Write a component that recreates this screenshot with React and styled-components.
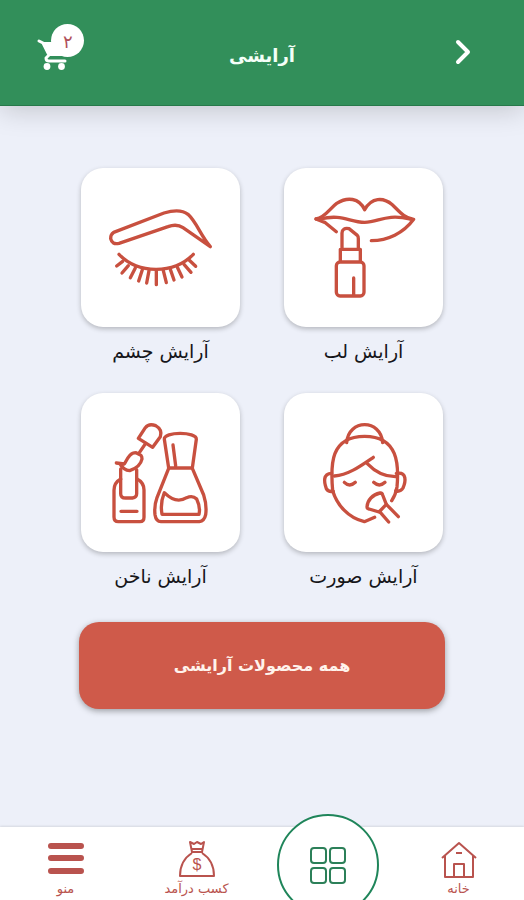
import React from 'react'
import styled, { createGlobalStyle } from 'styled-components'

const GlobalStyle = createGlobalStyle`
  * {
    box-sizing: border-box;
  }
  body {
    margin: 0;
    font-family: 'DejaVu Sans', sans-serif;
    background-color: #edf0f9;
  }
`
const Page = styled.div`
  min-height: 100vh;
  display: flex;
  flex-direction: column;
  overflow: hidden;
`
const Header = styled.header`
  height: 106px;
  padding: 0 36px;
  display: grid;
  grid-template-columns: 1fr auto 1fr;
  align-items: center;
  background-color: #328f5a;
  border-bottom: 1px solid #27794a;
  box-shadow: 0 4px 26px rgba(0, 0, 0, 0.18);
`
const Title = styled.h1`
  margin: 0;
  padding-top: 6px;
  font-size: 18px;
  line-height: 32px;
  font-weight: bold;
  color: #f4fff8;
`
const IconButton = styled.button`
  justify-self: ${props => (props.$end ? 'end' : 'start')};
  padding: 0;
  display: flex;
  border: none;
  background: none;
  color: #fff;
  cursor: pointer;
`
const CartButton = styled(IconButton)`
  position: relative;
  width: 48px;
  height: 46px;
  margin-bottom: 12px;
  align-items: flex-end;
  direction: ltr;
`
const Badge = styled.span`
  position: absolute;
  top: 0;
  right: 0;
  width: 33px;
  height: 33px;
  border-radius: 50%;
  background-color: #fff;
  color: #b0505a;
  font-size: 18px;
  line-height: 36px;
  text-align: center;
`
const Main = styled.main`
  flex: 1;
  padding: 62px 79px 40px;
`
const Categories = styled.div`
  padding: 0 2px;
  display: grid;
  grid-template-columns: 1fr 1fr;
  column-gap: 44px;
  row-gap: 28px;
`
const Category = styled.a`
  color: #16161a;
  text-decoration: none;
  text-align: center;
`
const Card = styled.span`
  display: block;
  aspect-ratio: 1;
  border-radius: 22px;
  background-color: #fff;
  box-shadow: 0 2px 5px rgba(0, 0, 0, 0.24);
`
const Drawing = styled.svg`
  display: block;
  width: 100%;
  height: 100%;
  fill: none;
  stroke: #c8503f;
  stroke-width: 10;
  stroke-linecap: round;
  stroke-linejoin: round;
`
const Label = styled.span`
  display: block;
  padding-top: 10px;
  font-size: 19px;
  line-height: 28px;
`
const AllProducts = styled.button`
  width: 100%;
  height: 87px;
  margin-top: 32px;
  border: none;
  border-radius: 20px;
  background-color: #cf5a4a;
  box-shadow: 0 2px 6px rgba(0, 0, 0, 0.35);
  color: #fff3ec;
  font-family: inherit;
  font-size: 16px;
  font-weight: bold;
  cursor: pointer;
`
const Nav = styled.nav`
  height: 73px;
  display: grid;
  grid-template-columns: repeat(4, 1fr);
  background-color: #fff;
  box-shadow: 0 -1px 2px rgba(0, 0, 0, 0.1);
`
const NavItem = styled.a`
  position: relative;
  padding-top: 12px;
  display: flex;
  flex-direction: column;
  align-items: center;
  color: #b9534e;
  font-size: 13px;
  line-height: 20px;
  text-decoration: none;
`
const NavIcon = styled.svg`
  width: 40px;
  height: 40px;
  fill: none;
  stroke: currentColor;
  stroke-width: 2;
  stroke-linejoin: round;
`
const Dollar = styled.text`
  fill: currentColor;
  stroke: none;
  font-family: 'Liberation Sans', sans-serif;
  font-size: 16px;
  text-anchor: middle;
`
const Circle = styled.span`
  position: absolute;
  top: -13px;
  width: 102px;
  height: 102px;
  display: flex;
  align-items: center;
  justify-content: center;
  border: 2px solid #1f855a;
  border-radius: 50%;
  background-color: #fff;
  color: #2c8059;
`

const LipIcon = () => (
  <Drawing viewBox='12 24 477 477' aria-hidden='true'>
    <path d='M108 177C134 174 150 145 170 130C202 110 237 113 254 149C275 112 309 111 337 134C357 153 372 174 401 178C370 220 323 242 274 242' />
    <path d='M108 177L136 188L169 215M120 177C186 161 207 186 254 187C298 187 314 160 392 177' />
    <path d='M186 267V219Q187 202 207 206L232 226Q235 229 235 236V267M181 304V268H241V304' />
    <rect x='169' y='306' width='83' height='102' rx='11' />
    <path d='M221 354V406' />
  </Drawing>
)

const EyeIcon = () => (
  <Drawing viewBox='18 24 477 477' aria-hidden='true'>
    <path d='M116 217L267 159Q315 144 339 163C366 188 376 226 406 260L324 203Q305 190 279 200L132 250Q111 255 107 236Q106 224 116 217Z' />
    <path d='M132 283C189 343 297 343 355 283' />
    <path d='M143 304L125 318M160 317L141 339M181 324L166 353M202 329L191 363M222 332L215 369M244 332V374M265 332L274 368M286 328L297 360M307 322L321 351M327 313L348 337M343 301L362 319' />
  </Drawing>
)

const FaceIcon = () => (
  <Drawing viewBox='12 24 477 477' aria-hidden='true'>
    <path d='M200 173C205 101 303 101 308 173' />
    <path d='M158 317C151 238 151 154 254 154C355 154 357 240 351 306Q347 330 335 347M158 317C171 360 205 399 253 410L284 397' />
    <path d='M163 273C205 270 242 243 280 217M261 235C283 258 309 276 349 275' />
    <path d='M155 265C128 266 132 291 139 311Q145 322 160 319M349 265C382 259 377 291 369 309Q362 321 347 318' />
    <path d='M193 292Q209 308 226 292M281 292Q298 308 315 292' />
    <path d='M261 366C262 345 278 329 300 324Q306 323 308 330L319 358L297 381L267 372Q261 371 261 366Z' />
    <path d='M299 380L326 411M319 358L355 395' />
  </Drawing>
)

const NailIcon = () => (
  <Drawing viewBox='18 24 477 477' aria-hidden='true'>
    <path d='M190 160L211 128Q222 114 242 122Q263 134 256 155L233 187Z' />
    <path d='M212 175L191 206M124 234L148 237C158 220 164 203 183 203L198 211Q201 214 201 222Q196 246 164 257Q146 256 134 236' />
    <path d='M137 252V326Q137 339 152 339H172Q185 337 185 326V254' />
    <path d='M137 282Q117 293 117 316V396Q117 410 130 410H195Q207 410 207 397V315Q207 292 185 281M138 379H186' />
    <path d='M281 249L268 163C265 139 366 139 364 163L352 249M281 249H352M302 242L294 180' />
    <path d='M281 250L246 338Q237 362 240 389Q243 409 258 410H373Q388 408 392 389Q396 361 386 330L352 250' />
    <path d='M268 323C292 347 316 350 335 338Q353 330 365 342Q377 367 372 388H261Q255 354 268 323Z' />
  </Drawing>
)

const categories = [
  { title: 'آرایش لب', Icon: LipIcon },
  { title: 'آرایش چشم', Icon: EyeIcon },
  { title: 'آرایش صورت', Icon: FaceIcon },
  { title: 'آرایش ناخن', Icon: NailIcon }
]

const App = () => {
  return (
    <Page dir='rtl' lang='fa'>
      <GlobalStyle />
      <Header>
        <IconButton aria-label='بازگشت'>
          <svg width='50' height='28' viewBox='0 0 50 28' fill='none'>
            <path
              d='M20 3L30 13L20 23'
              stroke='currentColor'
              strokeWidth='4'
              strokeLinecap='round'
              strokeLinejoin='round'
            />
          </svg>
        </IconButton>
        <Title>آرایشی</Title>
        <CartButton $end aria-label='سبد خرید'>
          <svg width='34' height='32' viewBox='0 0 34 32'>
            <path d='M7 4H26V18H13Z' fill='currentColor' />
            <path
              d='M3 3L7 5L13 17L10 20Q10 23 13 23H29'
              fill='none'
              stroke='currentColor'
              strokeWidth='3'
              strokeLinecap='round'
              strokeLinejoin='round'
            />
            <circle cx='11' cy='28.5' r='3.4' fill='currentColor' />
            <circle cx='25.5' cy='28.5' r='3.4' fill='currentColor' />
          </svg>
          <Badge>۲</Badge>
        </CartButton>
      </Header>
      <Main>
        <Categories>
          {categories.map(({ title, Icon }) => (
            <Category href='#' key={title}>
              <Card>
                <Icon />
              </Card>
              <Label>{title}</Label>
            </Category>
          ))}
        </Categories>
        <AllProducts>همه محصولات آرایشی</AllProducts>
      </Main>
      <Nav>
        <NavItem href='#'>
          <NavIcon viewBox='0 0 40 40'>
            <path d='M3 19L20 4L37 19M6 17V38H34V17M15 38V25H25V38M17 14H23' />
          </NavIcon>
          خانه
        </NavItem>
        <NavItem href='#' aria-label='دسته بندی'>
          <Circle>
            <NavIcon viewBox='0 0 40 40'>
              <rect x='3' y='3' width='15' height='15' rx='3' />
              <rect x='22' y='3' width='15' height='15' rx='3' />
              <rect x='3' y='23' width='15' height='15' rx='3' />
              <rect x='22' y='23' width='15' height='15' rx='3' />
            </NavIcon>
          </Circle>
        </NavItem>
        <NavItem href='#'>
          <NavIcon viewBox='0 0 40 40'>
            <path d='M15 13L13 3L17 5L20 3L24 5L27 3L25 13ZM15 10H25M15 14C7 19 3 26 3 37H37C37 26 33 19 25 14' />
            <Dollar x='20' y='31'>$</Dollar>
          </NavIcon>
          کسب درآمد
        </NavItem>
        <NavItem href='#'>
          <NavIcon viewBox='0 0 40 40'>
            <path
              d='M5 7H35M5 19H35M5 32H35'
              strokeWidth='6'
              strokeLinecap='round'
            />
          </NavIcon>
          منو
        </NavItem>
      </Nav>
    </Page>
  )
}

export default App
